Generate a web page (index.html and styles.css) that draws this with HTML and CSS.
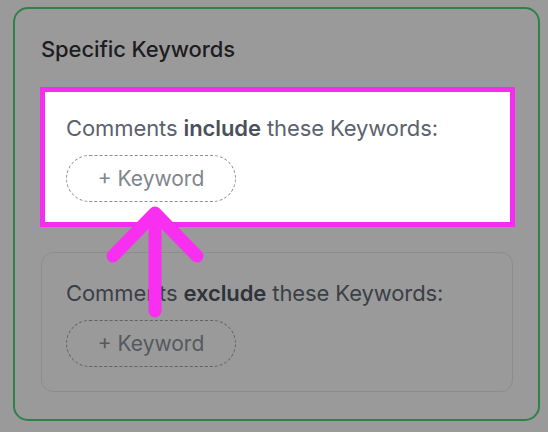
FILE: index.html
```html
<!DOCTYPE html>
<html>
<head>
<meta charset="utf-8">
<link rel="stylesheet" href="styles.css">
</head>
<body>
<div class="card">
  <h2 class="title">Specific Keywords</h2>
  <div class="kw-box kw-box--active">
    <p class="kw-label">Comments <b>include</b> these Keywords:</p>
    <button class="kw-add">+ Keyword</button>
  </div>
  <div class="kw-box kw-box--dim">
    <p class="kw-label">Comments <b>exclude</b> these Keywords:</p>
    <button class="kw-add">+ Keyword</button>
  </div>
</div>
<svg class="arrow" width="548" height="432" viewBox="0 0 548 432">
  <path d="M155 213 V311 M113 256 L155 213 L197 256" fill="none" stroke="#f82ff0" stroke-width="13" stroke-linecap="round" stroke-linejoin="round"/>
</svg>
</body>
</html>
```
FILE: styles.css
```css
html, body {
  margin: 0;
  padding: 0;
}
body {
  width: 548px;
  height: 432px;
  background: #9a9a9a;
  font-family: Inter, "Noto Sans", sans-serif;
  position: relative;
  overflow: hidden;
}
.card {
  box-sizing: border-box;
  margin: 7px 8px 0 13px;
  height: 414px;
  border: 2px solid #2f8049;
  border-radius: 15px;
  padding: 27px 25px 0 26px;
  display: flex;
  flex-direction: column;
  gap: 25px;
}
.title {
  margin: 0;
  font-size: 22px;
  line-height: 26px;
  font-weight: 500;
  letter-spacing: -0.1px;
  color: #1d1d1f;
}
.kw-box {
  box-sizing: border-box;
  height: 140px;
  border-radius: 12px;
  display: flex;
  flex-direction: column;
  align-items: flex-start;
}
.kw-box--active {
  background: #ffffff;
  border: 5px solid #f72cf2;
  border-radius: 0;
  margin: 0 -2px 0 -1px;
  padding: 22px 21px 0 21px;
}
.kw-box--dim {
  border: 1px solid #8c8d90;
  padding: 26px 24px 0 24px;
}
.kw-label {
  margin: 0;
  font-size: 22px;
  line-height: 28px;
  color: #5b626d;
  letter-spacing: -0.1px;
}
.kw-label b {
  font-weight: 600;
  color: #4a515c;
}
.kw-box--dim .kw-label {
  color: #3b3f46;
}
.kw-box--dim .kw-label b {
  color: #2f333a;
}
.kw-add {
  margin-top: 13px;
  width: 170px;
  height: 47px;
  border-radius: 24px;
  border: 1px dashed #8a8e94;
  background: transparent;
  font-family: inherit;
  font-size: 21px;
  color: #80868e;
  padding: 0;
}
.kw-box--dim .kw-add {
  border-color: #5f6267;
  color: #55595f;
}
.arrow {
  position: absolute;
  left: 0;
  top: 0;
}
```
